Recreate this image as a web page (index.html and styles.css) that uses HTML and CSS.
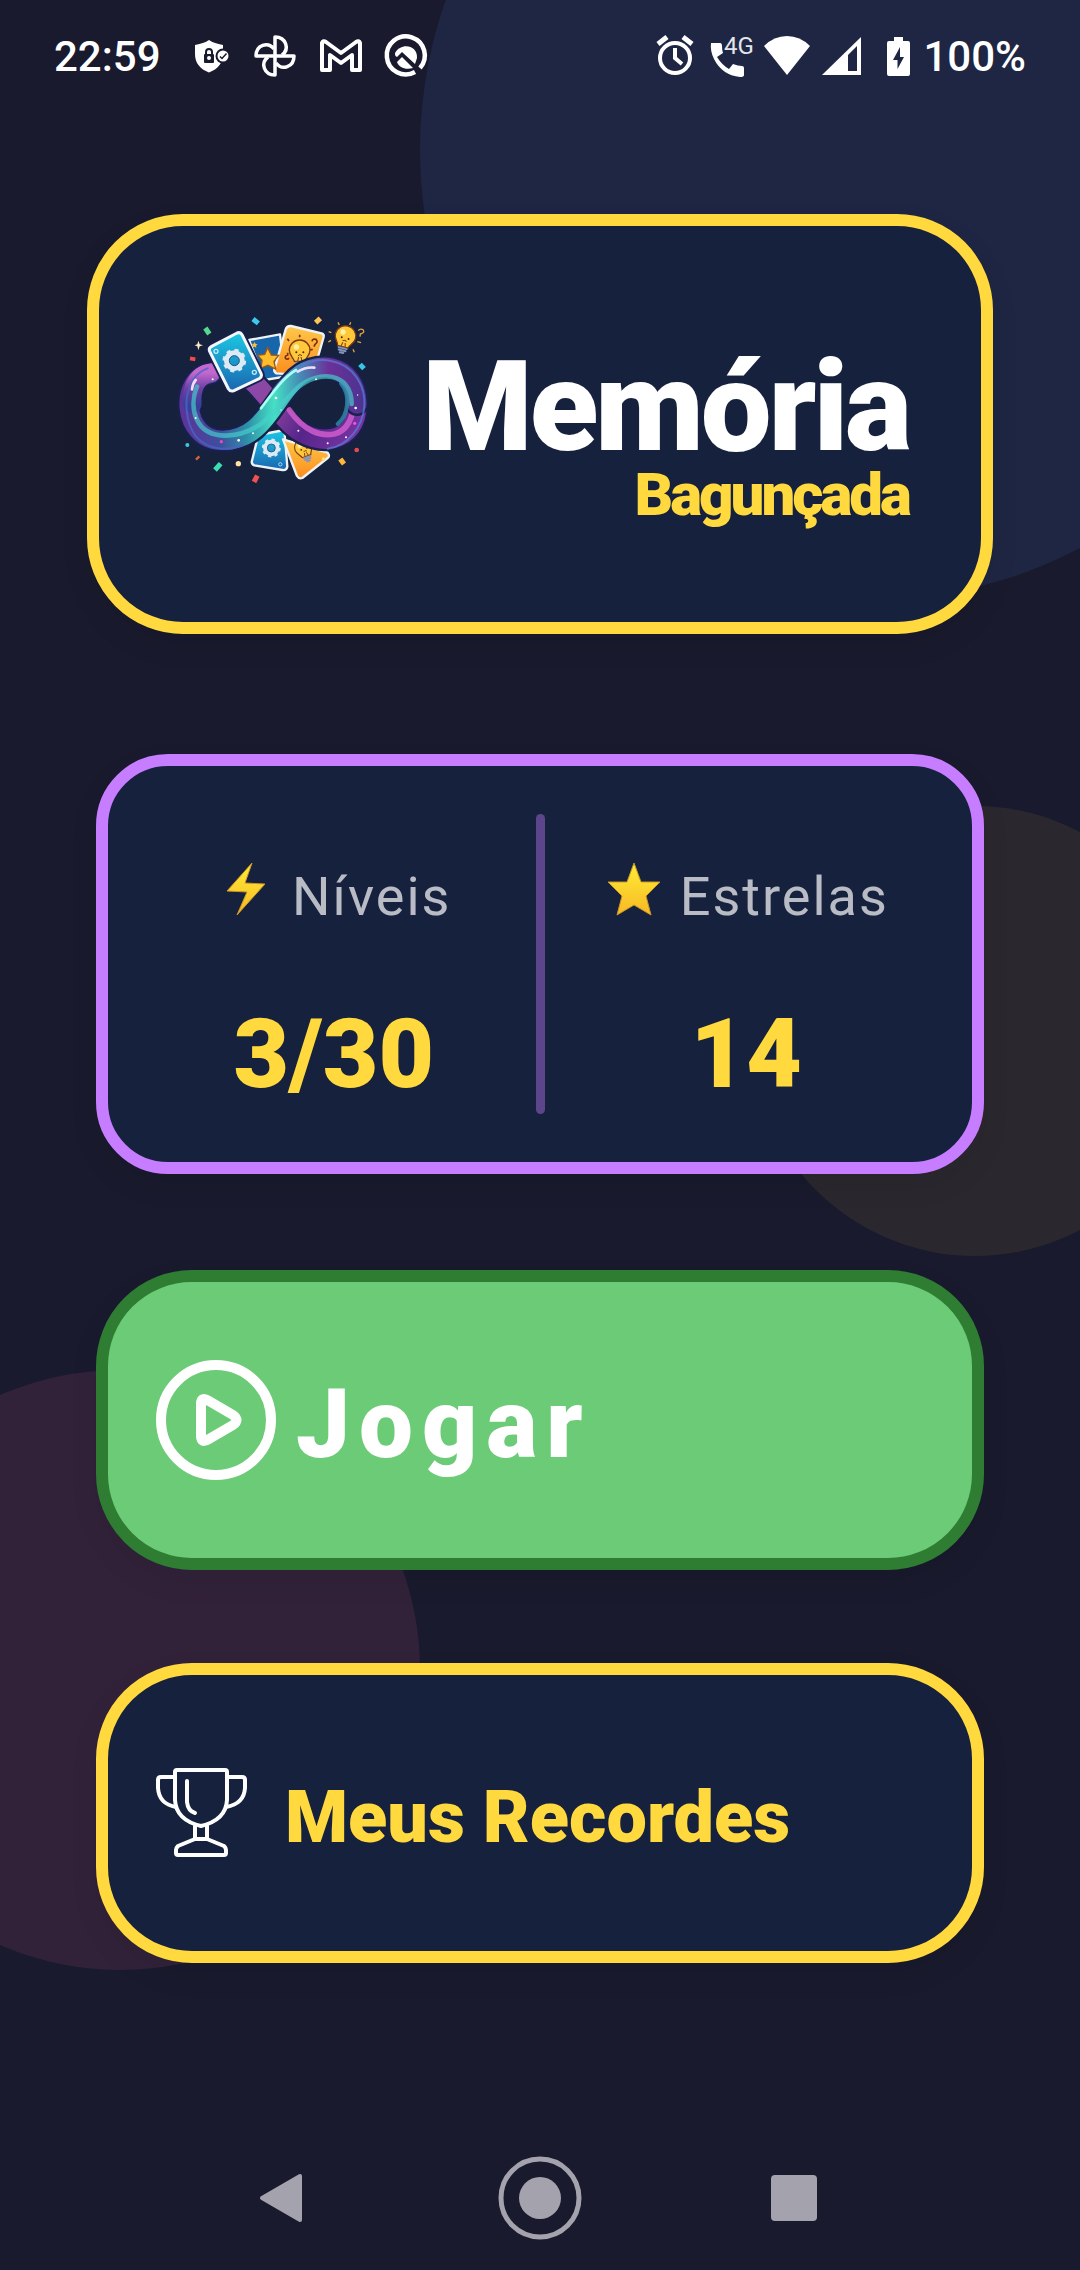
FILE: index.html
```html
<!DOCTYPE html>
<html lang="pt-BR">
<head>
  <meta charset="UTF-8" />
  <meta name="viewport" content="width=device-width, initial-scale=1.0"/>
  <title>Memória Bagunçada</title>
  <link rel="stylesheet" href="styles.css">
</head>
<body>
  <div class="bubbles" aria-hidden="true">
    <div class="bubble bubble-blue"></div>
    <div class="bubble bubble-yellow"></div>
    <div class="bubble bubble-pink"></div>
  </div>

  <header class="status-bar">
    <span class="clock">22:59</span>
    <div class="notifications">
      <svg width="36" height="42" viewBox="0 0 36 42">
        <path fill="#fff" d="M15 5C11 8 5 9 1 10V19C1 28 6 34 15 37.500C24 34 29 28 29 19V10C25 9 19 8 15 5Z"/>
        <rect x="10" y="19" width="10" height="9" rx="1" fill="#1a1a2e"/>
        <path d="M12 20v-3a3 3 0 0 1 6 0v3" fill="none" stroke="#1a1a2e" stroke-width="2"/>
        <circle cx="15" cy="23" r="2" fill="#fff"/>
        <circle cx="29" cy="21" r="7.500" fill="#1a1a2e"/>
        <circle cx="29" cy="21" r="5.500" fill="#fff"/>
        <path d="M26 21.500l2 2 4.500-5" fill="none" stroke="#1a1a2e" stroke-width="1.500"/>
      </svg>
      <svg width="42" height="42" viewBox="0 0 42 42" fill="none" stroke="#fff" stroke-width="3.500" stroke-linejoin="round">
        <path id="petal" d="M21 21V2C32 2 36 14 28 20"/>
        <use href="#petal" transform="rotate(90 21 21)"/>
        <use href="#petal" transform="rotate(180 21 21)"/>
        <use href="#petal" transform="rotate(270 21 21)"/>
      </svg>
      <svg width="42" height="42" viewBox="0 0 42 42" fill="none" stroke="#fff" stroke-width="4" stroke-linejoin="round">
        <path d="M2 35V8Q3 5 6 7L21 18L36 7Q39 5 40 8V35H32V20L21 28L10 20V35Z"/>
      </svg>
      <svg width="44" height="44" viewBox="0 0 44 44">
        <path d="M29 38A19 19 0 1 1 34 34" fill="none" stroke="#fff" stroke-width="4.500"/>
        <path fill="#fff" d="M9 19C15 8 32 11 31 24L29 30L16 18L11 23C9 22 9 21 9 19Z"/>
        <path fill="#fff" d="M11 28L16 23L27 34C20 36 13 34 11 28Z"/>
      </svg>
    </div>
    <div class="system">
      <svg class="alarm" width="38" height="42" viewBox="0 0 38 42" fill="none" stroke="#fff" stroke-width="4">
        <circle cx="19" cy="23" r="15"/>
        <path d="M19 13V23L26 29"/>
        <path d="M2 9L11 2M36 9L27 2" stroke-width="5"/>
      </svg>
      <svg class="call" width="44" height="44" viewBox="0 0 44 44">
        <path fill="#fff" d="M1 9H10Q12 9 12 12Q12 16 13 19L7 23Q12 31 19 35L23 30Q28 32 32 32Q34 32 34 34V41Q34 43 30 43Q12 41 4 25Q0 17 1 9Z"/>
        <text class="network" x="14" y="20">4G</text>
      </svg>
      <svg class="wifi" width="46" height="42" viewBox="0 0 46 42">
        <path fill="#fff" d="M0 11Q10 1 23 1T46 11L23 40Z"/>
      </svg>
      <svg class="signal" width="40" height="42" viewBox="0 0 40 42">
        <path fill="#fff" d="M0 40L39 2V40Z"/>
        <path fill="#1f2643" d="M26 20L35 11V36H26Z"/>
      </svg>
      <svg class="battery" width="24" height="42" viewBox="0 0 24 42">
        <path fill="#fff" d="M7 2H16V6H21Q23 6 23 8V39Q23 41 21 41H2Q0 41 0 39V8Q0 6 2 6H7Z"/>
        <path fill="#1f2643" d="M13 12L6 25H10.500V34L17 22H13Z"/>
      </svg>
      <span>100%</span>
    </div>
  </header>

  <main class="home">
    <section class="card title-card">
      <svg class="logo" viewBox="0 0 690 600" aria-hidden="true">
        <defs>
          <linearGradient id="cardBlue" x1="0" y1="0" x2="0" y2="1">
            <stop offset="0" stop-color="#1bc8e4"/>
            <stop offset="1" stop-color="#1a66b0"/>
          </linearGradient>
          <linearGradient id="cardOrange" x1="0" y1="0" x2="0" y2="1">
            <stop offset="0" stop-color="#ffc84a"/>
            <stop offset="1" stop-color="#fb8c1c"/>
          </linearGradient>
          <linearGradient id="bandBack" gradientUnits="userSpaceOnUse" x1="240" y1="220" x2="600" y2="420">
            <stop offset="0" stop-color="#8a4bb0"/>
            <stop offset="0.300" stop-color="#8d459f"/>
            <stop offset="0.600" stop-color="#56258a"/>
            <stop offset="1" stop-color="#7a35a5"/>
          </linearGradient>
          <linearGradient id="bandFront" gradientUnits="userSpaceOnUse" x1="70" y1="0" x2="610" y2="0">
            <stop offset="0" stop-color="#5b3599"/>
            <stop offset="0.200" stop-color="#3d4f9e"/>
            <stop offset="0.350" stop-color="#2f8fa8"/>
            <stop offset="0.500" stop-color="#45e0c4"/>
            <stop offset="0.650" stop-color="#4688b4"/>
            <stop offset="0.800" stop-color="#6b3199"/>
            <stop offset="1" stop-color="#4c3390"/>
          </linearGradient>
          <linearGradient id="bandLeft" x1="0" y1="0" x2="0" y2="1">
            <stop offset="0" stop-color="#c368cf"/>
            <stop offset="0.500" stop-color="#6d3fa3"/>
            <stop offset="1" stop-color="#3a409a"/>
          </linearGradient>
          <g id="gear">
            <circle r="23" fill="none" stroke="#dceaf5" stroke-width="16"/>
            <circle r="31" fill="none" stroke="#dceaf5" stroke-width="9" stroke-dasharray="12 12.300"/>
            <circle r="15" fill="none" stroke="#16557f" stroke-width="3"/>
          </g>
          <g id="bulb">
            <path d="M-16 23C-18 12-31 5-31-10A31 31 0 0 1 31-10C31 5 18 12 16 23Z" fill="#ffc83a" stroke="#7a3c10" stroke-width="4"/>
            <circle cx="-10" cy="-20" r="8" fill="#fff1a0"/>
            <circle cx="-10" cy="-4" r="3" fill="#53270c"/>
            <circle cx="11" cy="-4" r="3" fill="#53270c"/>
            <path d="M-5 6Q1 0 7 6M-6 22L-3 10M7 22L4 10" fill="none" stroke="#7a3c10" stroke-width="3"/>
            <path d="M-12 27H13M-10 34H11M-5 41H6" stroke="#8193bd" stroke-width="6" stroke-linecap="round"/>
          </g>
        </defs>

        <!-- cards behind the ribbon -->
        <g stroke="#eef3f8" stroke-width="7" stroke-linejoin="round">
          <path d="M264 120L357 103L372 230L310 240Z" fill="#1766ac"/>
          <path d="M390 78L482 100Q490 103 488 111L458 216Q452 230 440 226L346 220Q338 216 340 208L374 88Q378 77 390 78Z" fill="url(#cardOrange)"/>
          <path d="M292 405L370 390L379 500Q376 512 364 510L280 496Q270 492 273 482Z" fill="url(#cardBlue)"/>
          <path d="M366 418L500 458Q508 468 500 474L424 534Q414 538 408 528Z" fill="url(#cardOrange)"/>
        </g>
        <path d="M320 143L331 165L353 166L339 184L344 207L321 196L300 204L303 181L290 166L311 163Z" fill="#ffbd2b" stroke="#9b5714" stroke-width="4"/>
        <path d="M281 126L284 132L290 133L285 137L286 143L280 140L275 142L276 136L272 132L278 131Z" fill="#ffbd2b"/>
        <use href="#bulb" transform="translate(416 161)"/>
        <path d="M453 124Q455 115 465 118Q473 126 462 133L459 140M380 158V165Q370 168 374 176Q380 180 384 174M416 112V104M384 123L379 116M448 150L455 148" fill="none" stroke="#7a2f13" stroke-width="5"/>
        <use href="#gear" transform="translate(331 444) scale(0.800)"/>
        <use href="#bulb" transform="translate(430 450) rotate(-20) scale(0.850)"/>
        <circle cx="487" cy="477" r="5" fill="#ffe064"/>
        <circle cx="358" cy="493" r="5" fill="none" stroke="#9fd8f5" stroke-width="3"/>

        <!-- infinity ribbon -->
        <g fill="none" stroke-linecap="round">
          <path d="M240 215C310 265 340 330 395 378C470 445 588 430 588 312" stroke="#18204b" stroke-width="72"/>
          <path d="M240 215C310 265 340 330 395 378C470 445 588 430 588 312" stroke="url(#bandBack)" stroke-width="58"/>
          <path d="M385 330C430 395 480 410 520 402C560 392 577 350 577 312" stroke="#d75fd0" stroke-width="17" opacity="0.800"/>
          <path d="M150 220C70 230 62 380 145 420" stroke="#18204b" stroke-width="72"/>
          <path d="M588 312C585 185 455 175 395 245C330 315 300 420 185 421C60 422 55 230 150 220" stroke="#18204b" stroke-width="72"/>
          <path d="M588 312C585 185 455 175 395 245C330 315 300 420 185 421C60 422 55 230 150 220" stroke="url(#bandFront)" stroke-width="58"/>
          <path d="M150 218C100 224 90 280 94 312" stroke="url(#bandLeft)" stroke-width="56"/>
          <path d="M572 312C572 215 470 210 410 263C345 325 300 405 195 407C100 408 83 320 108 260" stroke="#45d3cd" stroke-width="14" opacity="0.650"/>
          <path d="M140 205C65 230 60 350 105 410C140 450 200 455 245 435" stroke="#4b63c4" stroke-width="6" opacity="0.800"/>
          <path d="M335 272C390 195 460 172 510 183C580 195 615 260 610 320C605 380 560 440 500 446" stroke="#5a76cf" stroke-width="6" opacity="0.800"/>
          <path d="M300 325C340 270 370 230 405 210" stroke="#a8fff0" stroke-width="8"/>
          <path d="M410 215Q435 200 460 203M93 268Q95 250 104 240" stroke="#f0dcff" stroke-width="8"/>
          <path d="M540 250C570 285 562 345 530 372" stroke="#2d9fb8" stroke-width="12" opacity="0.700"/>
        </g>
        <g fill="#fff">
          <circle cx="155" cy="238" r="3"/>
          <circle cx="104" cy="354" r="3"/>
          <circle cx="233" cy="421" r="4"/>
          <circle cx="276" cy="400" r="3"/>
          <circle cx="345" cy="294" r="4"/>
          <circle cx="360" cy="330" r="2"/>
          <circle cx="412" cy="392" r="3"/>
          <circle cx="500" cy="430" r="3"/>
          <circle cx="555" cy="412" r="3"/>
          <circle cx="584" cy="324" r="4"/>
          <circle cx="590" cy="285" r="2"/>
          <circle cx="465" cy="238" r="3"/>
        </g>
        <circle cx="181" cy="425" r="5" fill="#e64bb5"/>
        <circle cx="581" cy="370" r="5" fill="#f04fe0"/>

        <!-- front card -->
        <path d="M152 139L228 99Q238 95 243 104L300 220Q304 230 296 235L219 272Q208 276 202 266L146 154Q142 144 152 139Z" fill="url(#cardBlue)" stroke="#18204b" stroke-width="20"/>
        <path d="M152 139L228 99Q238 95 243 104L300 220Q304 230 296 235L219 272Q208 276 202 266L146 154Q142 144 152 139Z" fill="url(#cardBlue)" stroke="#f4f8fb" stroke-width="9"/>
        <use href="#gear" transform="translate(220 182)"/>
        <g fill="none" stroke="#bdebf7" stroke-width="4">
          <circle cx="165" cy="154" r="6"/>
          <circle cx="280" cy="217" r="6"/>
        </g>

        <!-- loose bulb and confetti -->
        <use href="#bulb" transform="translate(551 118) rotate(14)"/>
        <path d="M592 92Q598 84 607 90Q612 98 598 102L597 110M535 75L531 67M566 75L569 67M503 95L511 98M502 126L510 121M589 125L600 128M576 148L580 157" fill="none" stroke="#e8a13a" stroke-width="4"/>
        <g stroke-linecap="butt" stroke-width="15">
          <path d="M133 84L145 102" stroke="#56d98c"/>
          <path d="M276 57L292 70" stroke="#3bc9f0"/>
          <path d="M464 68L478 55" stroke="#ffc457"/>
          <path d="M597 193L609 206" stroke="#37c6e8"/>
          <path d="M162 510L179 491" stroke="#3ddcb0"/>
          <path d="M279 546L289 527" stroke="#f0524f"/>
          <path d="M538 477L549 492" stroke="#ffb739"/>
          <path d="M87 175L103 178" stroke="#ef4d4d" stroke-width="11"/>
          <path d="M105 479L115 469" stroke="#d9613a" stroke-width="7"/>
        </g>
        <circle cx="79" cy="435" r="6" fill="#3bcbe0"/>
        <circle cx="232" cy="491" r="8" fill="#ffe4a3"/>
        <circle cx="587" cy="450" r="7" fill="#e8484d"/>
        <path d="M112 122L116 133L126 136L116 139L112 151L109 139L101 136L109 133Z" fill="#ffe9c2"/>
      </svg>
      <h1 class="title">
        <span class="title-main">Memória</span>
        <span class="title-sub">Bagunçada</span>
      </h1>
    </section>

    <section class="card stats-card">
      <div class="stat">
        <div class="stat-label">
          <svg width="64" height="64" viewBox="0 0 64 64" aria-hidden="true">
            <defs>
              <linearGradient id="gold" x1="0" y1="0" x2="0" y2="1">
                <stop offset="0" stop-color="#ffee36"/>
                <stop offset="1" stop-color="#f8b825"/>
              </linearGradient>
            </defs>
            <path d="M36 -2L11 26L31 27L21 50L49 19L29 18Z" fill="url(#gold)" stroke="#c99526" stroke-width="1" stroke-linejoin="round"/>
          </svg>
          <span>Níveis</span>
        </div>
        <div class="stat-value">3/30</div>
      </div>
      <div class="divider"></div>
      <div class="stat">
        <div class="stat-label">
          <svg width="64" height="64" viewBox="0 0 64 64" aria-hidden="true">
            <path d="M30 -2L37 17L56 17L42 31L47 50L30 40L13 50L18 31L4 17L23 17Z" fill="url(#gold)" stroke="#c99526" stroke-width="1" stroke-linejoin="round"/>
          </svg>
          <span>Estrelas</span>
        </div>
        <div class="stat-value">14</div>
      </div>
    </section>

    <button class="card action play" type="button">
      <svg width="120" height="120" viewBox="0 0 120 120" fill="none" stroke="#fff" stroke-width="10" stroke-linejoin="round" aria-hidden="true">
        <circle cx="60" cy="60" r="55"/>
        <path d="M45 44Q45 36 53 41L77 55Q84 60 77 65L53 79Q45 84 45 76Z"/>
      </svg>
      <span class="action-label">Jogar</span>
    </button>

    <button class="card action records" type="button">
      <svg width="92" height="90" viewBox="0 0 92 90" fill="none" stroke="#fff" stroke-width="4" stroke-linejoin="round" stroke-linecap="round" aria-hidden="true">
        <path d="M19 4Q19 2 21 2H69Q71 2 71 4V32Q70 52 45 58Q20 52 19 32Z"/>
        <path d="M19 9H5Q2 9 2 12V20Q3 36 20 39M71 9H86Q89 9 89 12V20Q88 36 70 39"/>
        <path d="M31 13V34Q32 43 39 45"/>
        <path d="M39 58V71M51 58V71"/>
        <path d="M39 71H51L68 78Q70 80 70 82V85Q70 87 68 87H22Q20 87 20 85V82Q20 80 22 78Z"/>
      </svg>
      <span class="action-label">Meus Recordes</span>
    </button>
  </main>

  <nav class="nav-bar">
    <button type="button" aria-label="Voltar">
      <svg width="84" height="84" viewBox="0 0 84 84"><path d="M18 42L56 20V64Z" fill="#a4a3ad" stroke="#a4a3ad" stroke-width="4" stroke-linejoin="round"/></svg>
    </button>
    <button type="button" aria-label="Início">
      <svg width="84" height="84" viewBox="0 0 84 84">
        <circle cx="42" cy="42" r="39" fill="none" stroke="#a4a3ad" stroke-width="5"/>
        <circle cx="42" cy="42" r="21" fill="#a4a3ad"/>
      </svg>
    </button>
    <button type="button" aria-label="Recentes">
      <svg width="84" height="84" viewBox="0 0 84 84"><rect x="19" y="19" width="46" height="46" rx="4" fill="#a4a3ad"/></svg>
    </button>
  </nav>
</body>
</html>
```

FILE: styles.css
```css
* {
  box-sizing: border-box;
}
body {
  margin: 0;
  min-height: 100vh;
  display: flex;
  flex-direction: column;
  position: relative;
  background: #1a1a2e;
  color: white;
  font-family: Roboto, sans-serif;
}
svg {
  display: block;
  flex-shrink: 0;
  overflow: visible;
}
button {
  font-family: inherit;
  cursor: pointer;
}

/* background circles */
.bubbles {
  position: absolute;
  inset: 0;
  overflow: hidden;
  z-index: -1;
}
.bubble {
  position: absolute;
  border-radius: 50%;
}
.bubble-blue {
  width: 900px;
  height: 900px;
  top: -300px;
  right: -240px;
  background: rgba(77, 150, 255, 0.1);
}
.bubble-yellow {
  width: 450px;
  height: 450px;
  top: 806px;
  right: -120px;
  background: rgba(255, 217, 61, 0.07);
}
.bubble-pink {
  width: 600px;
  height: 600px;
  bottom: 300px;
  left: -180px;
  background: rgba(255, 107, 157, 0.1);
}

/* status bar */
.status-bar {
  display: flex;
  align-items: center;
  height: 112px;
  padding: 0 54px;
  font-size: 42px;
  font-weight: 500;
}
.notifications {
  display: flex;
  align-items: center;
  gap: 24px;
  margin-left: 33px;
}
.system {
  display: flex;
  align-items: center;
  margin-left: auto;
}
.alarm {
  margin-right: 16px;
}
.call {
  margin-right: 10px;
}
.wifi,
.battery {
  margin-right: 12px;
}
.signal {
  margin-right: 25px;
}
.network {
  font-size: 24px;
  font-weight: 400;
  fill: #e4e5ea;
}

/* cards */
.home {
  flex: 1;
  display: flex;
  flex-direction: column;
  padding: 102px 96px 0;
}
.card {
  border: 12px solid #ffd93d;
  border-radius: 96px;
  background: #16213e;
  box-shadow: 0 12px 30px rgba(0, 0, 0, 0.07);
}
.title-card {
  display: flex;
  justify-content: space-between;
  align-items: flex-start;
  min-height: 420px;
  margin: 0 -9px 120px;
  padding: 74px 72px 0 62px;
}
.logo {
  width: 230px;
  height: 200px;
}
.title {
  display: flex;
  flex-direction: column;
  align-items: flex-end;
  margin: 47px 0 0;
  font-weight: 900;
  letter-spacing: -3px;
}
.title-main {
  font-size: 126px;
  line-height: 120px;
}
.title-sub {
  color: #ffd93d;
  font-size: 60px;
  line-height: 56px;
}

.stats-card {
  display: flex;
  margin-bottom: 96px;
  padding: 48px 24px;
  border-color: #c77dff;
  border-radius: 72px;
}
.stat {
  flex: 1;
  padding-top: 48px;
  text-align: center;
}
.stat-label {
  display: flex;
  justify-content: center;
  align-items: center;
  gap: 12px;
  margin-bottom: 72px;
  color: rgba(255, 255, 255, 0.7);
  font-size: 54px;
  line-height: 70px;
  letter-spacing: 2px;
}
.stat-value {
  color: #ffd93d;
  font-size: 96px;
  font-weight: 900;
  line-height: 100px;
}
.divider {
  width: 9px;
  height: 300px;
  border-radius: 6px;
  background: rgba(199, 125, 255, 0.4);
}

/* action buttons */
.action {
  display: flex;
  align-items: center;
  min-height: 300px;
  padding: 0 48px;
  text-align: left;
}
.action-label {
  padding-top: 8px;
}
.play {
  gap: 20px;
  margin-bottom: 93px;
  border-color: #2e7d32;
  background: #6bcb77;
  color: white;
  font-size: 96px;
  font-weight: 900;
  letter-spacing: 9px;
}
.records {
  gap: 37px;
  color: #ffd93d;
  font-size: 72px;
  font-weight: 900;
}

/* navigation */
.nav-bar {
  display: flex;
  justify-content: center;
  gap: 170px;
  padding: 0 0 30px;
}
.nav-bar button {
  padding: 0;
  border: none;
  background: none;
}
```
